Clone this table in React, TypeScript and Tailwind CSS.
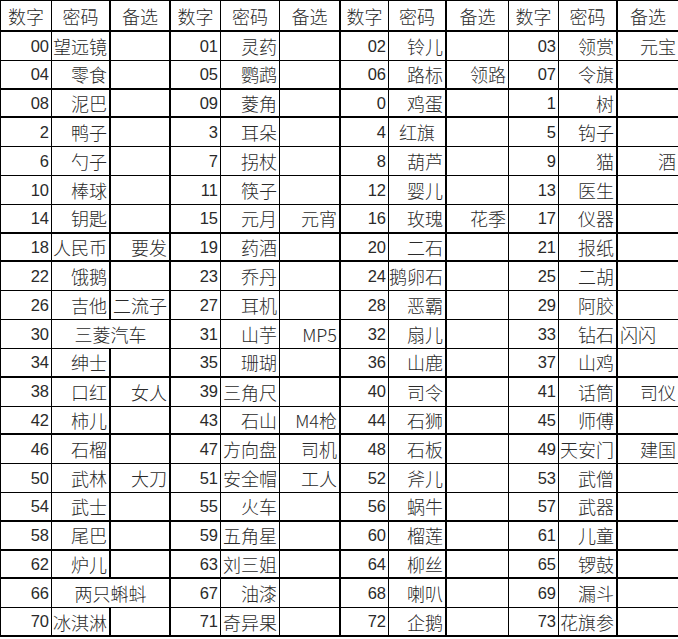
import React from "react";

type Align = "r" | "c" | "l";
type Cell = { t: string; a?: Align; span?: number; num?: boolean };

const raw: string[][] = [
  ["00", "望远镜", "", "01", "灵药", "", "02", "铃儿", "", "03", "领赏", "元宝"],
  ["04", "零食", "", "05", "鹦鹉", "", "06", "路标", "领路", "07", "令旗", ""],
  ["08", "泥巴", "", "09", "菱角", "", "0", "鸡蛋", "", "1", "树", ""],
  ["2", "鸭子", "", "3", "耳朵", "", "4", "红旗", "", "5", "钩子", ""],
  ["6", "勺子", "", "7", "拐杖", "", "8", "葫芦", "", "9", "猫", "酒"],
  ["10", "棒球", "", "11", "筷子", "", "12", "婴儿", "", "13", "医生", ""],
  ["14", "钥匙", "", "15", "元月", "元宵", "16", "玫瑰", "花季", "17", "仪器", ""],
  ["18", "人民币", "要发", "19", "药酒", "", "20", "二石", "", "21", "报纸", ""],
  ["22", "饿鹅", "", "23", "乔丹", "", "24", "鹅卵石", "", "25", "二胡", ""],
  ["26", "吉他", "二流子", "27", "耳机", "", "28", "恶霸", "", "29", "阿胶", ""],
  ["30", "三菱汽车", "", "31", "山芋", "MP5", "32", "扇儿", "", "33", "钻石", "闪闪"],
  ["34", "绅士", "", "35", "珊瑚", "", "36", "山鹿", "", "37", "山鸡", ""],
  ["38", "口红", "女人", "39", "三角尺", "", "40", "司令", "", "41", "话筒", "司仪"],
  ["42", "柿儿", "", "43", "石山", "M4枪", "44", "石狮", "", "45", "师傅", ""],
  ["46", "石榴", "", "47", "方向盘", "司机", "48", "石板", "", "49", "天安门", "建国"],
  ["50", "武林", "大刀", "51", "安全帽", "工人", "52", "斧儿", "", "53", "武僧", ""],
  ["54", "武士", "", "55", "火车", "", "56", "蜗牛", "", "57", "武器", ""],
  ["58", "尾巴", "", "59", "五角星", "", "60", "榴莲", "", "61", "儿童", ""],
  ["62", "炉儿", "", "63", "刘三姐", "", "64", "柳丝", "", "65", "锣鼓", ""],
  ["66", "两只蝌蚪", "", "67", "油漆", "", "68", "喇叭", "", "69", "漏斗", ""],
  ["70", "冰淇淋", "", "71", "奇异果", "", "72", "企鹅", "", "73", "花旗参", ""],
];

const thickCols = new Set([1, 2, 5, 7, 10]);
const thickRows = new Set([0, 2, 3, 7, 8, 12, 14, 17, 18, 19, 21]);

function buildRow(r: string[], ri: number): Cell[] {
  const cells: Cell[] = [];
  for (let i = 0; i < 12; i++) {
    const t = r[i];
    if ((ri === 10 || ri === 19) && i === 1) {
      cells.push({ t, a: "c", span: 2 });
      i++;
      continue;
    }
    let a: Align = "r";
    if (ri === 3 && i === 7) a = "c";
    if (ri === 10 && i === 11) a = "l";
    cells.push({ t, a, num: i % 3 === 0 });
  }
  return cells;
}

export default function App() {
  const header = ["数字", "密码", "备选", "数字", "密码", "备选", "数字", "密码", "备选", "数字", "密码", "备选"];
  const out: React.ReactNode[] = [];

  header.forEach((h, ci) => {
    out.push(
      <div
        key={`h${ci}`}
        className={`flex items-center justify-center border-black border-b-2 ${thickCols.has(ci) ? "border-r-2" : "border-r"}`}
      >
        {h}
      </div>
    );
  });

  raw.forEach((r, idx) => {
    const ri = idx + 1;
    const cells = buildRow(r, idx);
    let col = 0;
    cells.forEach((c, k) => {
      const span = c.span ?? 1;
      const lastCol = col + span - 1;
      const rb = thickCols.has(lastCol) ? "border-r-2" : "border-r";
      const bb = thickRows.has(ri) ? "border-b-2" : "border-b";
      const just =
        c.a === "c" ? "justify-center" : c.a === "l" ? "justify-start pl-[2px]" : "justify-end pr-[2px]";
      out.push(
        <div
          key={`${ri}-${k}`}
          className={`flex items-center whitespace-nowrap overflow-hidden border-black ${rb} ${bb} ${just} ${span === 2 ? "col-span-2" : ""} ${c.num ? "text-[16.5px] font-['Liberation_Sans']" : ""}`}
        >
          {c.t}
        </div>
      );
      col += span;
    });
  });

  return (
    <div className="w-[678px] h-[639px] bg-white overflow-hidden">
      <div
        className="grid w-[678px] h-[637px] border-t border-l border-black grid-cols-[51px_59px_60px_50px_59px_61px_48px_58px_62px_50px_59px_61px] grid-rows-[31px_repeat(21,minmax(0,1fr))] text-[18px] leading-none text-[#2a2a2a] font-light"
        style={{ fontFamily: "'Noto Sans CJK SC', 'Liberation Sans', sans-serif" }}
      >
        {out}
      </div>
    </div>
  );
}
